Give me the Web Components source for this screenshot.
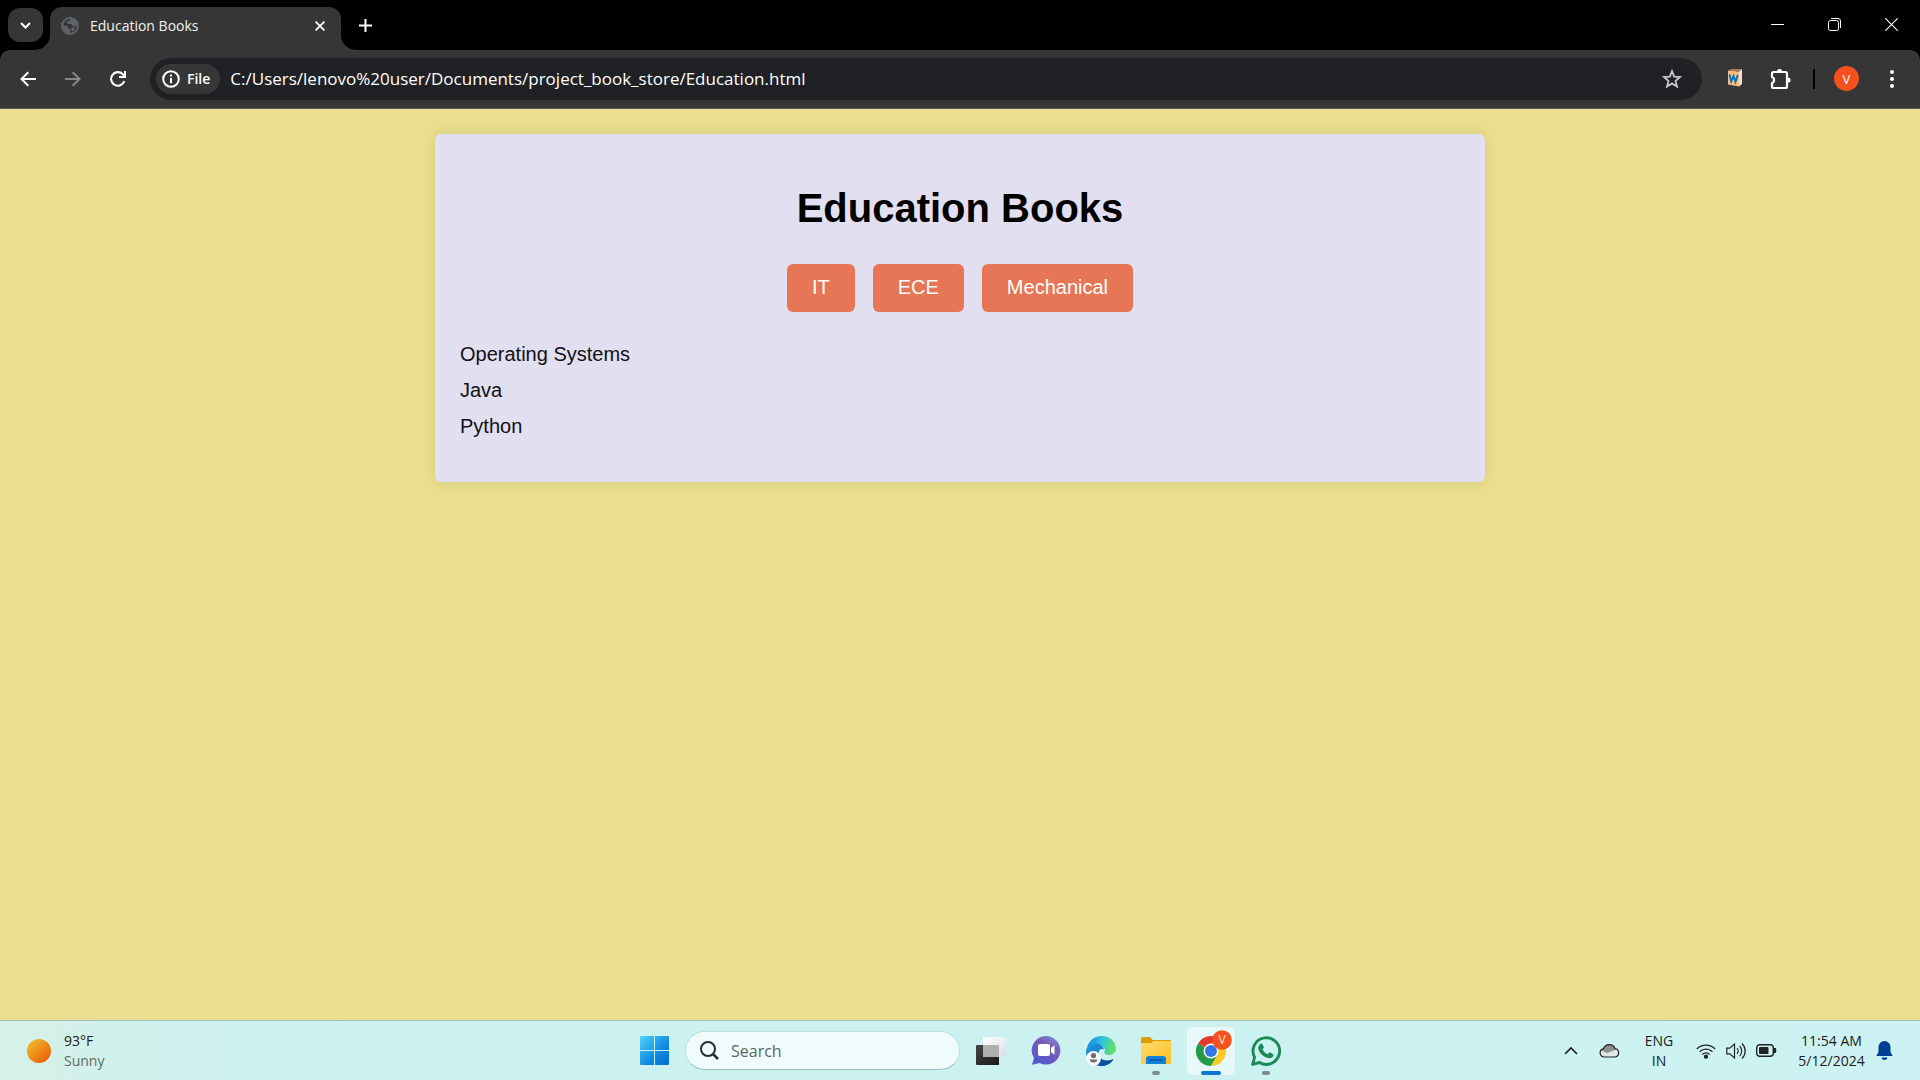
<!DOCTYPE html>
<html lang="en">
<head>
<meta charset="utf-8">
<title>Education Books</title>
<style>
  html, body { height: 100%; margin: 0; }
  body { display: flex; flex-direction: column; background: #eadf8e; font-family: "Open Sans", "Noto Sans", sans-serif; overflow: hidden; }
  book-page { flex: 1; min-height: 0; }
</style>
</head>
<body>
<browser-frame></browser-frame>
<book-page>
  <span slot="title">Education Books</span>
  <book-category>IT</book-category>
  <book-category>ECE</book-category>
  <book-category>Mechanical</book-category>
  <book-list slot="books">
    <book-item>Operating Systems</book-item>
    <book-item>Java</book-item>
    <book-item>Python</book-item>
  </book-list>
</book-page>
<task-bar></task-bar>

<script>
const define = (name, html) => customElements.define(name, class extends HTMLElement {
  constructor() {
    super();
    const t = document.createElement('template');
    t.innerHTML = html;
    this.attachShadow({ mode: 'open' }).append(t.content.cloneNode(true));
  }
});

const reset = `
  :host, * { box-sizing: border-box; }
  button, input { font: inherit; color: inherit; border: 0; padding: 0; margin: 0; background: none; outline: 0; }
  button { display: grid; place-items: center; }
  svg { display: block; }
`;

define('browser-tab', `
<style>${reset}
  :host { display: flex; align-items: flex-end; margin-left: -8px; }
  .body { display: flex; align-items: center; width: 291px; height: 43px; padding: 0 11px 6px; gap: 11px; border-radius: 12px 12px 0 0; background: #363636; color: #f2f2f2; font-size: 14px; line-height: 20px; }
  .title { flex: 1; }
  .close { width: 20px; height: 20px; }
</style>
<svg width="15" height="15" viewBox="0 0 15 15"><path d="M15 0v15H0A15 15 0 0 0 15 0z" fill="#363636"/></svg>
<div class="body">
  <svg width="18" height="18" viewBox="0 0 18 18"><circle cx="9" cy="9" r="8" fill="#363636" stroke="#5f6368" stroke-width="2"/><path d="M2 8l4 1 1 2 2 1 .5 4.500C5 17 1.500 13 2 8zM10 1.500l-1 2-3 1 .5 2.500h4l1 2 5 .5C17 5 14 1.500 10 1.500zM11 10l3 1-1 3-2 .5-1-2z" fill="#5f6368"/></svg>
  <span class="title"><slot></slot></span>
  <button class="close" aria-label="Close tab"><svg width="10" height="10" viewBox="0 0 10 10" stroke="#fff" stroke-width="1.800"><path d="M.6.6l8.800 8.800M9.400.6L.6 9.400"/></svg></button>
</div>
<svg width="15" height="15" viewBox="0 0 15 15"><path d="M0 0v15h15A15 15 0 0 1 0 0z" fill="#363636"/></svg>
`);

define('window-controls', `
<style>${reset}
  :host { display: flex; height: 50px; }
  button { width: 57px; height: 48px; }
</style>
<button aria-label="Minimize"><svg width="13" height="13" viewBox="0 0 13 13"><path d="M0 6.500h13" stroke="#fff"/></svg></button>
<button aria-label="Restore"><svg width="13" height="13" viewBox="0 0 13 13" fill="none" stroke="#fff"><path d="M3 .5h7a2.500 2.500 0 0 1 2.500 2.500v7"/><rect x=".5" y="2.500" width="10" height="10" rx="2"/></svg></button>
<button aria-label="Close"><svg width="13" height="13" viewBox="0 0 13 13" stroke="#fff" stroke-width="1.100"><path d="M.3.3l12.400 12.400M12.700.3L.3 12.700"/></svg></button>
`);

define('address-bar', `
<style>${reset}
  :host { display: flex; align-items: center; flex: 1; height: 42px; padding: 0 20px 0 6px; gap: 10px; border-radius: 21px; background: #202124; color: #fff; }
  .chip { display: flex; align-items: center; gap: 7px; height: 30px; padding: 0 10px 0 6px; border-radius: 15px; background: #363636; font-size: 14px; font-weight: 600; line-height: 20px; }
  input { flex: 1; min-width: 0; font-size: 17px; line-height: 24px; height: 24px; }
</style>
<button class="chip"><svg width="18" height="18" viewBox="0 0 18 18" fill="none" stroke="#fff" stroke-width="2"><circle cx="9" cy="9" r="7.800"/><path d="M9 8v5.200M9 4.600v2" /></svg>File</button>
<input aria-label="Address" value="C:/Users/lenovo%20user/Documents/project_book_store/Education.html">
<button aria-label="Bookmark this tab"><svg width="20" height="20" viewBox="0 0 20 20" fill="none" stroke="#c7c7c7" stroke-width="1.800"><path d="M10 2.200l2.200 5.400 5.900.4-4.500 3.800 1.400 5.700-5-3.100-5 3.100 1.400-5.700L1.900 8l5.900-.4z"/></svg></button>
`);

define('browser-frame', `
<style>${reset}
  :host { display: block; background: #000; }
  .strip { display: flex; align-items: flex-end; height: 50px; padding-left: 8px; }
  .tabs { width: 35px; height: 34px; margin-bottom: 8px; border-radius: 12px; background: #363636; z-index: 1; }
  .new { width: 36px; height: 36px; margin: 0 auto 7px -9px; }
  .toolbar { display: flex; align-items: center; height: 59px; padding: 0 12px 1px 12px; background: #363636; border-bottom: 1px solid #5c5c5c; border-radius: 10px 10px 0 0; }
  .nav { display: flex; gap: 13px; margin-right: 16px; }
  .nav button, .tools > button { width: 32px; height: 32px; }
  .tools { display: flex; align-items: center; gap: 14px; margin-left: 17px; }
  .rule { width: 2px; height: 20px; margin: 0 2px; background: #000; }
  .tools .me { width: 25px; height: 25px; margin: 0 3px; border-radius: 50%; background: #f4511e; color: #fff; font-size: 13px; line-height: 20px; }
</style>
<div class="strip">
  <button class="tabs" aria-label="Search tabs"><svg width="11" height="7" viewBox="0 0 11 7" fill="none" stroke="#fff" stroke-width="2"><path d="M1 1l4.500 4.500L10 1"/></svg></button>
  <browser-tab>Education Books</browser-tab>
  <button class="new" aria-label="New tab"><svg width="13" height="13" viewBox="0 0 13 13" stroke="#fff" stroke-width="2"><path d="M6.500 0v13M0 6.500h13"/></svg></button>
  <window-controls></window-controls>
</div>
<div class="toolbar">
  <div class="nav">
    <button aria-label="Back"><svg width="16" height="16" viewBox="0 0 16 16" fill="none" stroke="#fff" stroke-width="2"><path d="M8.300 1.200L1.500 8l6.800 6.800M1.500 8H16"/></svg></button>
    <button aria-label="Forward"><svg width="16" height="16" viewBox="0 0 16 16" fill="none" stroke="#868686" stroke-width="2"><path d="M7.700 1.200L14.500 8l-6.800 6.800M14.500 8H0"/></svg></button>
    <button aria-label="Reload"><svg width="16" height="16" viewBox="0 0 16 16" fill="none" stroke="#fff" stroke-width="2.100"><path d="M14.300 10.200A6.800 6.800 0 1 1 12.800 3.200L15 5.500M15 0v6H9"/></svg></button>
  </div>
  <address-bar></address-bar>
  <div class="tools">
    <button aria-label="Word extension"><svg width="16" height="19" viewBox="0 0 16 19"><path d="M1 1.500L12 2.500v15L1 15.500z" fill="#f5bd83"/><path d="M1 1.500L4 0h11l-3 2.500z" fill="#b4764d"/><path d="M12 2.500L15 0v15l-3 2.500z" fill="#f3e3d2"/><path d="M2.500 5.500l1.700 7 2.300-5.500 2 6 2.200-7" fill="none" stroke="#0b73b3" stroke-width="1.900"/></svg></button>
    <button aria-label="Extensions"><svg width="22" height="22" viewBox="0 0 22 22"><path d="M3.500 4h12a1.500 1.500 0 0 1 1.500 1.500v13a1.500 1.500 0 0 1-1.500 1.500h-12A1.500 1.500 0 0 1 2 18.500V15a3.200 3.200 0 0 0 0-6V5.500A1.500 1.500 0 0 1 3.500 4z" fill="none" stroke="#fff" stroke-width="2.200" stroke-linejoin="round"/><path d="M7 3.500a2.600 2.600 0 0 1 5.200 0zM18 9.400a2.600 2.600 0 0 1 0 5.200z" fill="#fff"/></svg></button>
    <div class="rule"></div>
    <button class="me" aria-label="Profile V">V</button>
    <button aria-label="Menu"><svg width="4" height="18" viewBox="0 0 4 18" fill="#fff"><circle cx="2" cy="2" r="2"/><circle cx="2" cy="9" r="2"/><circle cx="2" cy="16" r="2"/></svg></button>
  </div>
</div>
`);

define('book-category', `
<style>${reset}
  :host { display: block; }
  button { height: 48px; padding: 0 25px 2px; border-radius: 6px; background: #e67655; color: #fff; font-size: 20px; line-height: 23px; }
</style>
<button><slot></slot></button>
`);

define('book-item', `
<style>
  :host { display: list-item; list-style: none; font-size: 20px; line-height: 23px; margin-bottom: 13px; }
</style>
<slot></slot>
`);

define('book-list', `
<style>
  :host { display: block; }
</style>
<slot></slot>
`);

define('book-page', `
<style>
  :host { display: block; padding: 25px; background: #eadf8e; color: #111; font-family: "Liberation Sans", Arial, sans-serif; }
  main { box-sizing: border-box; max-width: 1050px; margin: 0 auto; padding: 51px 25px 31px; border-radius: 6px; background: #e2dff0; box-shadow: 0 0 12px rgba(0, 0, 0, .1); }
  h1 { margin: 0 0 33px; font-size: 40px; line-height: 46px; text-align: center; color: #000; }
  nav { display: flex; justify-content: center; gap: 18px; margin-bottom: 31px; }
</style>
<main>
  <h1><slot name="title"></slot></h1>
  <nav><slot></slot></nav>
  <slot name="books"></slot>
</main>
`);

define('task-button', `
<style>${reset}
  :host { display: block; }
  button { position: relative; width: 48px; height: 48px; border-radius: 5px; }
  :host([active]) button { background: #e7f8f9; box-shadow: 0 0 1px 1px #d5ebec; }
  :host([running]) button::after { content: ""; position: absolute; bottom: 0; left: 20px; width: 8px; height: 4px; border-radius: 2px; background: #7b8f8f; }
  :host([active]) button::after { left: 14px; width: 20px; background: #0a78d4; }
</style>
<button><slot></slot></button>
`);

define('task-search', `
<style>${reset}
  :host { display: block; }
  label { display: flex; align-items: center; gap: 12px; width: 275px; height: 39px; padding: 0 14px; border-radius: 20px; background: #f0fcfc; border: 1px solid #bcdfe0; border-bottom-color: #9dbfc1; }
  input { flex: 1; min-width: 0; height: 24px; font-size: 16px; line-height: 24px; }
  input::placeholder { color: #5c6666; opacity: 1; }
</style>
<label><svg width="19" height="19" viewBox="0 0 19 19" fill="none" stroke="#2b2b2b" stroke-width="2"><circle cx="8" cy="8" r="7"/><path d="M13 13l5 5" stroke-width="2.500"/></svg><input type="text" placeholder="Search" aria-label="Search"></label>
`);

define('system-tray', `
<style>${reset}
  :host { display: flex; align-items: center; justify-content: flex-end; font-size: 14px; line-height: 20px; color: #1b2020; }
  .up { width: 20px; margin-right: 18px; }
  .cloud { width: 21px; margin-right: 23px; }
  .lang { text-align: center; width: 32px; margin-right: 21px; }
  .status { display: flex; align-items: center; gap: 10px; margin-right: 20px; }
  .clock { display: block; min-width: 69px; text-align: right; margin-right: 10px; }
  .clock span, .lang span { display: block; }
</style>
<button class="up" aria-label="Show hidden icons"><svg width="14" height="9" viewBox="0 0 14 9" fill="none" stroke="#222" stroke-width="1.700"><path d="M1 8l6-6 6 6"/></svg></button>
<button class="cloud" aria-label="OneDrive"><svg width="21" height="15" viewBox="0 0 21 15"><path d="M5 14a4.200 4.200 0 0 1-.5-8.300A6.200 6.200 0 0 1 16 5.500 4.300 4.300 0 0 1 16 14z" fill="#e5e5e5"/><path d="M2 7.500l2.500-2A6.200 6.200 0 0 1 16 5.500l2 .8L8 10z" fill="#8e9090"/><path d="M5 14a4.200 4.200 0 0 1-.5-8.300A6.200 6.200 0 0 1 16 5.500 4.300 4.300 0 0 1 16 14z" fill="none" stroke="#222" stroke-width="1.200"/></svg></button>
<button class="lang"><div><span>ENG</span><span>IN</span></div></button>
<button class="status" aria-label="Network, volume, battery">
  <svg width="20" height="16" viewBox="0 0 20 16" fill="none" stroke="#222" stroke-width="1.300"><path d="M.8 6a13 13 0 0 1 18.400 0M3.600 8.800a9 9 0 0 1 12.800 0M6.400 11.500a5 5 0 0 1 7.200 0"/><circle cx="10" cy="13.700" r="1.500" fill="#222"/></svg>
  <svg width="20" height="18" viewBox="0 0 20 18" fill="none" stroke="#222" stroke-width="1.200"><path d="M.8 6.200h3L8.500 2v14l-4.700-4.200h-3z"/><path d="M11 6.200a4 4 0 0 1 0 5.600M13.600 3.800a7.500 7.500 0 0 1 0 10.400M16 1.500a10.500 10.500 0 0 1 0 15"/></svg>
  <svg width="21" height="13" viewBox="0 0 21 13"><rect x=".7" y=".7" width="16.600" height="11.600" rx="3" fill="none" stroke="#222" stroke-width="1.400"/><rect x="3" y="3" width="9.500" height="7" rx="1" fill="#222"/><path d="M18 4h1.200a1 1 0 0 1 1 1v3a1 1 0 0 1-1 1H18z" fill="#222"/></svg>
</button>
<button class="clock"><span>11:54 AM</span><span>5/12/2024</span></button>
<button aria-label="Notifications"><svg width="17" height="19" viewBox="0 0 17 19" fill="#003f91"><path d="M8.500 0a6 6 0 0 1 6 6v5l2 3.500v.5H.5v-.5l2-3.500V6a6 6 0 0 1 6-6zM5.700 16.500h5.600a2.800 2.500 0 0 1-5.600 0z"/></svg></button>
`);

define('task-bar', `
<style>${reset}
  :host { display: grid; grid-template-columns: 1fr auto 1fr; align-items: center; height: 60px; padding: 0 27px; border-top: 1px solid #a9bfc4; background: linear-gradient(90deg, #d8f1e6 0, #cff1ec 130px, #cbf2f1 400px, #cbf2f1 75%, #cdf2f3 100%); }
  .weather { display: flex; align-items: center; gap: 13px; text-align: left; justify-self: start; font-size: 14px; line-height: 20px; color: #1b2020; }
  .weather span { display: block; }
  .weather .sky { color: #5c6a68; }
  .apps { display: flex; align-items: center; gap: 7px; }
</style>
<button class="weather">
  <svg width="24" height="24" viewBox="0 0 24 24"><defs><linearGradient id="sun" x1=".1" y1=".1" x2=".8" y2=".9"><stop offset="0" stop-color="#f0b92d"/><stop offset="1" stop-color="#ee6208"/></linearGradient></defs><circle cx="12" cy="12" r="12" fill="url(#sun)"/></svg>
  <div><span>93°F</span><span class="sky">Sunny</span></div>
</button>
<div class="apps">
  <task-button><svg width="29" height="29" viewBox="0 0 29 29"><defs><linearGradient id="win" x1="0" y1="0" x2="1" y2="1"><stop offset="0" stop-color="#4fd5ff"/><stop offset=".6" stop-color="#0f89de"/><stop offset="1" stop-color="#0470cf"/></linearGradient></defs><path d="M1 0h13v14H0V1a1 1 0 0 1 1-1zM15 0h13a1 1 0 0 1 1 1v13H15zM0 15h14v14H1a1 1 0 0 1-1-1zM15 15h14v13a1 1 0 0 1-1 1H15z" fill="url(#win)"/></svg></task-button>
  <task-search></task-search>
  <task-button><svg width="30" height="28" viewBox="0 0 30 28"><defs><linearGradient id="dk" x1="0" y1="0" x2="1" y2="1"><stop offset="0" stop-color="#454545"/><stop offset="1" stop-color="#181818"/></linearGradient><linearGradient id="lt" x1="0" y1="0" x2="1" y2="1"><stop offset="0" stop-color="#fff"/><stop offset="1" stop-color="#d9e0e0"/></linearGradient></defs><rect y="8" width="23" height="20" rx="1" fill="url(#dk)"/><rect x="7" width="23" height="20" rx="1" fill="url(#lt)"/><path d="M8 8h15v12H8a1 1 0 0 1-1-1V8z" fill="#aeb0b0"/></svg></task-button>
  <task-button><svg width="30" height="29" viewBox="0 0 30 29"><defs><linearGradient id="chat" x1="1" y1="0" x2=".4" y2="1"><stop offset="0" stop-color="#7b9bea"/><stop offset=".4" stop-color="#7a5fb4"/><stop offset="1" stop-color="#5558cd"/></linearGradient></defs><path d="M15 0a14.300 14.300 0 1 1-6.500 27L1 28.700 3 22A14.300 14.300 0 0 1 15 0z" fill="url(#chat)"/><rect x="7" y="8" width="12" height="12" rx="2" fill="#fff"/><path d="M20 12l3.500-2.700v9.400L20 16z" fill="#fff"/></svg></task-button>
  <task-button><svg width="30" height="30" viewBox="0 0 30 30"><defs><linearGradient id="e1" x1="0" y1=".3" x2="1" y2=".5"><stop offset="0" stop-color="#1289d8"/><stop offset=".5" stop-color="#2fc3df"/><stop offset="1" stop-color="#67e256"/></linearGradient><linearGradient id="e2" x1="0" y1="0" x2="1" y2="1"><stop offset="0" stop-color="#1b9de2"/><stop offset="1" stop-color="#0c59a4"/></linearGradient></defs><path d="M1 12C2.500 5 8 0 15.500 0 24 0 30 6 30 12.500c0 4-3 6.500-7 6.500-3.500 0-5-1.500-4.500-3 .8-2 .5-5-3.500-6.200C9 8 3 9 1 12z" fill="url(#e1)"/><path d="M0 15C1 9 6.500 6.500 12 8c4 1 6 3.500 6 5.500-4-1.500-6 1.500-5 5.500 1.500 5.500 8 7 14.500 4C25 27.500 20 30 15 30 6 30-.5 23 0 15z" fill="url(#e2)"/><path d="M12.500 17c0 7 8 10 15 6-2.500 4.500-7 7-12.500 7-5-2-5-9-2.500-13z" fill="#0b4f98"/><circle cx="7.500" cy="22.500" r="7.500" fill="#f7f7f7"/><circle cx="7.500" cy="19.500" r="2.600" fill="#6b6b6b"/><path d="M3.800 23.500h7.400c.5 4-7.900 4-7.400 0z" fill="#6b6b6b"/></svg></task-button>
  <task-button running><svg width="30" height="27" viewBox="0 0 30 27"><defs><linearGradient id="fo" x1="0" y1="0" x2="1" y2="1"><stop offset="0" stop-color="#ffdc6b"/><stop offset="1" stop-color="#fdbd25"/></linearGradient></defs><path d="M0 1.500A1.500 1.500 0 0 1 1.500 0H9l3 3h17a1 1 0 0 1 1 1v5H0z" fill="#dd9c06"/><path d="M0 6h10l3-2h16a1 1 0 0 1 1 1v21a1 1 0 0 1-1 1H1a1 1 0 0 1-1-1z" fill="url(#fo)"/><path d="M5 27v-5a3 3 0 0 1 3-3h14a3 3 0 0 1 3 3v5z" fill="#1180d8"/><path d="M8.500 23h13" stroke="#0b529c" stroke-width="1.400"/></svg></task-button>
  <task-button running active><svg width="46" height="46" viewBox="-4 -4 46 46"><g transform="translate(19 19)"><path d="M0 0L-13-7.500A15 15 0 0 1 13-7.500z" fill="#e33b2e"/><path d="M0 0L-13-7.500A15 15 0 0 0 0 15L6.500 4z" fill="#249a49"/><path d="M0-7.500H13A15 15 0 0 1 0 15L6.500 4z" fill="#fdc925"/><circle r="7.500" fill="#fff"/><circle r="6" fill="#3276e4"/></g><circle cx="30" cy="8" r="9.800" fill="#f4511e"/><text x="30" y="12" text-anchor="middle" font-size="12" fill="#ffe3d8" font-family="Open Sans, sans-serif">V</text></svg></task-button>
  <task-button running><svg width="30" height="30" viewBox="0 0 30 30"><path d="M1.600 28.400l2-7A13.300 13.300 0 1 1 8.500 26.500z" fill="none" stroke="#1c8a56" stroke-width="2.900" stroke-linejoin="round"/><path d="M9 8.200c.7-.8 1.900-.9 2.400 0l1.400 2.900c.2.500-.1 1-1.300 2.400 1.200 2.300 2.900 3.800 5.300 4.700 1.500-1.800 1.800-2 2.400-1.800l2.800 1.500c.8.500.4 2.500-.7 3.400-2 1.600-4.800 1-8-.8-3-1.900-5.200-4.700-5.900-7.300-.4-1.900.4-3.800 1.600-5z" fill="#1c8a56"/></svg></task-button>
</div>
<system-tray></system-tray>
`);
</script>
</body>
</html>
